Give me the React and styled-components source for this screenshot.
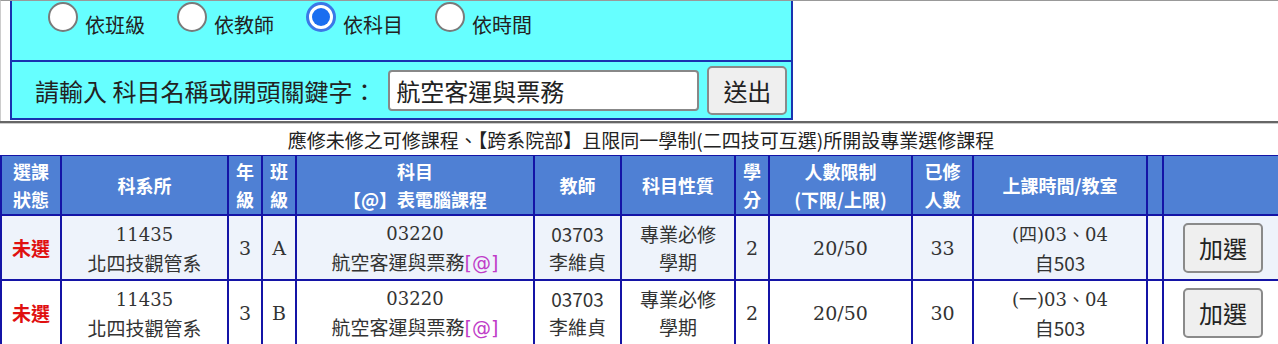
import React from "react";
import styled, {createGlobalStyle} from "styled-components";

const GlobalStyle = createGlobalStyle`
  html, body {
    margin: 0;
    padding: 0;
    background: #fff;
    overflow: hidden;
  }
  body {
    font-family: "Noto Sans CJK TC", "Noto Sans", sans-serif;
    color: #333;
  }
`

const Page = styled.div`
  width: 1278px;
`

const TopArea = styled.div`
  border-top: 1px solid #999;
  border-left: 1px solid #ccc;
  padding-left: 9px;
  height: 121px;
  box-sizing: border-box;
`

const SearchPanel = styled.div`
  width: 783px;
  height: 119px;
  box-sizing: border-box;
  background: #66ffff;
  border: 2px solid #1a33b0;
  border-top: none;
  display: flex;
  flex-direction: column;
`

const RadioRow = styled.div`
  height: 61px;
  display: flex;
  align-items: flex-start;
  padding: 0 0 0 36px;
  box-sizing: border-box;
  border-bottom: 2px solid #1a33b0;
`

const RadioItem = styled.label`
  display: flex;
  align-items: center;
  margin-right: 32px;
  font-size: 20px;
  color: #222;
  height: 46px;
`

const Radio = styled.span`
  width: 30px;
  height: 30px;
  box-sizing: border-box;
  border-radius: 50%;
  background: #fff;
  border: ${props => props.checked ? "3px solid #3b78e7" : "2px solid #7a7a7a"};
  margin-right: 7px;
  margin-top: -14px;
  display: flex;
  align-items: center;
  justify-content: center;
  &::after {
    content: "";
    width: 18px;
    height: 18px;
    border-radius: 50%;
    background: ${props => props.checked ? "#1a6ef0" : "transparent"};
  }
`

const InputRow = styled.div`
  flex: 1;
  display: flex;
  align-items: center;
  padding-left: 23px;
`

const Prompt = styled.span`
  font-size: 24px;
  color: #222;
  margin-right: 12px;
  white-space: nowrap;
  flex-shrink: 0;
`

const TextInput = styled.div`
  width: 311px;
  height: 41px;
  flex-shrink: 0;
  box-sizing: border-box;
  background: #fff;
  border: 2px solid #888;
  border-radius: 4px;
  font-size: 24px;
  line-height: 37px;
  padding-left: 6px;
  color: #222;
  margin-right: 8px;
`

const GreyButton = styled.button`
  width: ${props => props.w || 80}px;
  height: ${props => props.h || 49}px;
  flex-shrink: 0;
  background: #efefef;
  border: 2px solid #8a8a8a;
  border-radius: 5px;
  font-family: "Noto Sans CJK TC", sans-serif;
  font-size: 24px;
  color: #222;
  padding: 0;
`

const Rule = styled.div`
  height: 2px;
  background: #666;
  border-bottom: 1px solid #ccc;
`

const Title = styled.div`
  text-align: center;
  font-size: 19px;
  line-height: 32px;
  height: 31px;
  color: #222;
  padding-left: 4px;
`

const Table = styled.table`
  border-collapse: collapse;
  table-layout: fixed;
  width: 1282px;
`

const Th = styled.th`
  background: #4f80d4;
  color: #fff;
  font-weight: 700;
  font-size: 18px;
  line-height: 28px;
  height: 58px;
  padding: 0 2px;
  border: 2px solid #1414a6;
  border-top: 1px solid #1414a6;
  text-align: center;
  vertical-align: middle;
`

const Tr = styled.tr`
  background: ${props => props.shade ? "#eef3fb" : "#fff"};
`

const Td = styled.td`
  border: 2px solid #1414a6;
  height: 63px;
  padding: 0 2px;
  text-align: center;
  vertical-align: middle;
  font-size: 19px;
  line-height: 28px;
  color: #333;
  font-family: ${props => props.serif ? `"DejaVu Serif", "Noto Sans CJK TC", serif` : `"Noto Sans CJK TC", sans-serif`};
`

const Serif = styled.span`
  font-family: "DejaVu Serif", "Noto Sans CJK TC", serif;
  font-size: 18px;
`

const Status = styled.span`
  color: #e01010;
  font-weight: 700;
`

const AtMark = styled.span`
  color: #c03cc8;
  font-family: "DejaVu Sans", sans-serif;
`

const widths = [60, 167, 34, 34, 238, 87, 114, 34, 143, 61, 174, 16, 120];

const rows = [
  {cls: "A", taken: 33, time: "(四)03、04"},
  {cls: "B", taken: 30, time: "(一)03、04"}
];

export default function App() {
  return (
    <Page>
      <GlobalStyle />
      <TopArea>
        <SearchPanel>
          <RadioRow>
            <RadioItem><Radio />依班級</RadioItem>
            <RadioItem><Radio />依教師</RadioItem>
            <RadioItem><Radio checked />依科目</RadioItem>
            <RadioItem><Radio />依時間</RadioItem>
          </RadioRow>
          <InputRow>
            <Prompt>請輸入 科目名稱或開頭關鍵字：</Prompt>
            <TextInput>航空客運與票務</TextInput>
            <GreyButton>送出</GreyButton>
          </InputRow>
        </SearchPanel>
      </TopArea>
      <Rule />
      <Title>應修未修之可修課程、【跨系院部】且限同一學制(二四技可互選)所開設專業選修課程</Title>
      <Table>
        <colgroup>
          {widths.map((w, i) => <col key={i} style={{width: w}} />)}
        </colgroup>
        <thead>
          <tr>
            <Th>選課<br />狀態</Th>
            <Th>科系所</Th>
            <Th>年<br />級</Th>
            <Th>班<br />級</Th>
            <Th>科目<br />【@】表電腦課程</Th>
            <Th>教師</Th>
            <Th>科目性質</Th>
            <Th>學<br />分</Th>
            <Th>人數限制<br />(下限/上限)</Th>
            <Th>已修<br />人數</Th>
            <Th>上課時間/教室</Th>
            <Th></Th>
            <Th></Th>
          </tr>
        </thead>
        <tbody>
          {rows.map((r, i) => (
            <Tr key={i} shade={i === 0}>
              <Td><Status>未選</Status></Td>
              <Td><Serif>11435</Serif><br />北四技觀管系</Td>
              <Td serif>3</Td>
              <Td serif>{r.cls}</Td>
              <Td><Serif>03220</Serif><br />航空客運與票務<AtMark>[@]</AtMark></Td>
              <Td>03703<br />李維貞</Td>
              <Td>專業必修<br />學期</Td>
              <Td serif>2</Td>
              <Td serif>20/50</Td>
              <Td serif>{r.taken}</Td>
              <Td><Serif>{r.time}</Serif><br />自503</Td>
              <Td></Td>
              <Td><GreyButton w={80} h={50}>加選</GreyButton></Td>
            </Tr>
          ))}
        </tbody>
      </Table>
    </Page>
  );
}
